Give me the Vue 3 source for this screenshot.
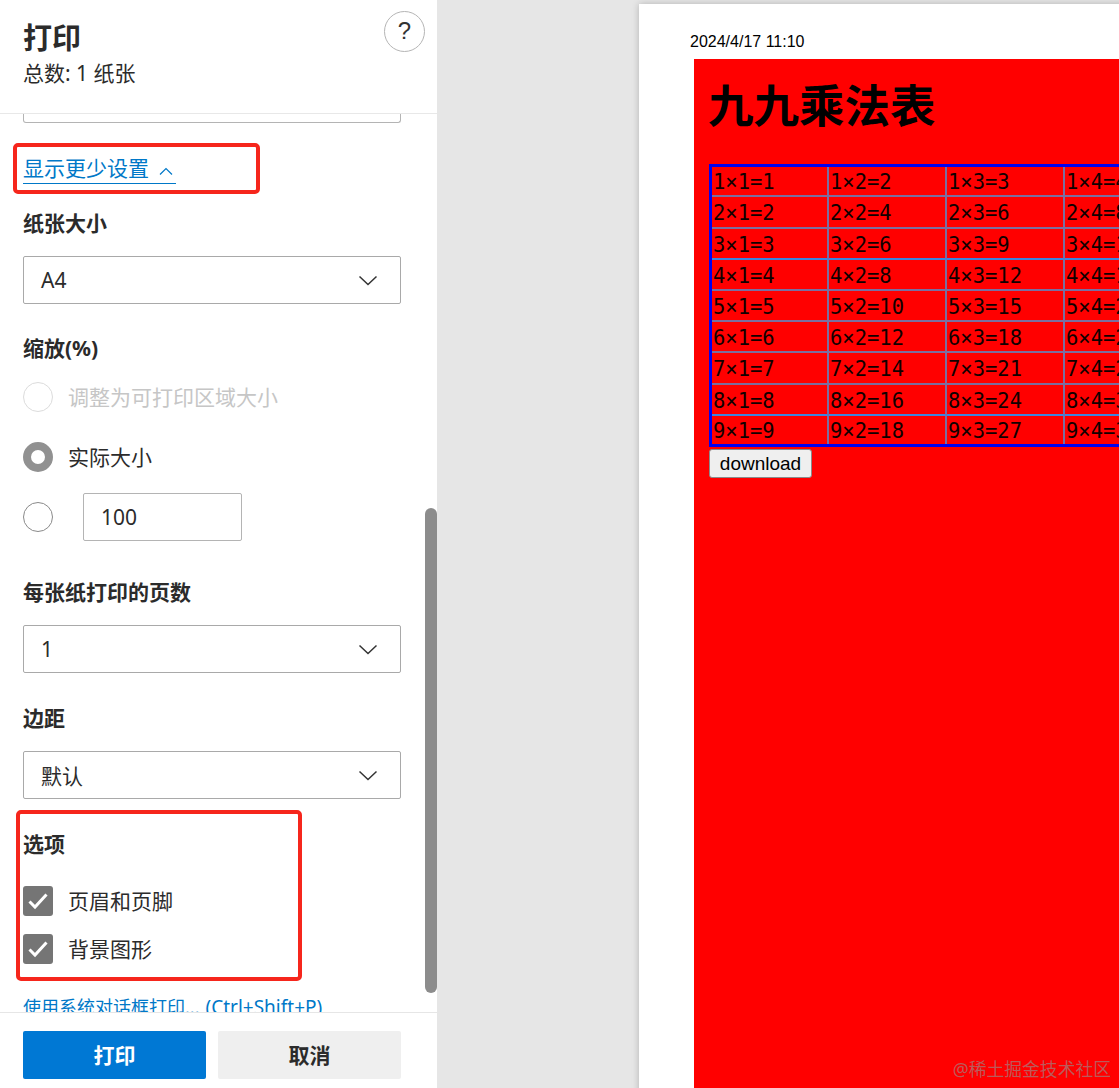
<script setup>
const rows = [1, 2, 3, 4, 5, 6, 7, 8, 9]
const cols = [1, 2, 3, 4, 5, 6, 7, 8, 9]
const rowHeights = [30, 32, 31, 31, 31, 31, 32, 31, 28]
const selects = { paper: 'A4', pages: '1', margin: '默认' }
</script>

<template>
  <div class="screen">
    <aside class="panel">
      <header class="head">
        <div>
          <h1 class="title">打印</h1>
          <p class="total">总数: 1 纸张</p>
        </div>
        <button class="help">?</button>
      </header>

      <div class="scroll">
        <div class="cut-select"></div>
        <a class="more">
          <span>显示更少设置</span>
          <svg width="14" height="8" viewBox="0 0 14 8"><path d="M1 7.500 7 1.500l6 6" fill="none" stroke="#0078c8" stroke-width="1.2"/></svg>
        </a>

        <div class="label paper-label">纸张大小</div>
        <div class="select"><span>{{ selects.paper }}</span><svg class="chev" width="20" height="11" viewBox="0 0 20 11"><path d="M1.500 1.500 10 9.500l8.500-8" fill="none" stroke="#333" stroke-width="1.500"/></svg></div>

        <div class="label gap30">缩放(%)</div>
        <div class="radio-row first disabled"><i class="radio off"></i><span>调整为可打印区域大小</span></div>
        <div class="radio-row second"><i class="radio on"></i><span>实际大小</span></div>
        <div class="radio-row third"><i class="radio"></i><div class="num">100</div></div>

        <div class="label gap37">每张纸打印的页数</div>
        <div class="select"><span>{{ selects.pages }}</span><svg class="chev" width="20" height="11" viewBox="0 0 20 11"><path d="M1.500 1.500 10 9.500l8.500-8" fill="none" stroke="#333" stroke-width="1.500"/></svg></div>

        <div class="label gap31">边距</div>
        <div class="select"><span>{{ selects.margin }}</span><svg class="chev" width="20" height="11" viewBox="0 0 20 11"><path d="M1.500 1.500 10 9.500l8.500-8" fill="none" stroke="#333" stroke-width="1.500"/></svg></div>

        <div class="label gap31">选项</div>
        <div class="check-row first-check">
          <i class="check"><svg width="30" height="30" viewBox="0 0 30 30"><path d="M6.500 15.500 12 21 23.500 8.500" fill="none" stroke="#fff" stroke-width="3"/></svg></i>
          <span>页眉和页脚</span>
        </div>
        <div class="check-row second-check">
          <i class="check"><svg width="30" height="30" viewBox="0 0 30 30"><path d="M6.500 15.500 12 21 23.500 8.500" fill="none" stroke="#fff" stroke-width="3"/></svg></i>
          <span>背景图形</span>
        </div>
        <a class="system">使用系统对话框打印...<span class="keys">(Ctrl+Shift+P)</span></a>
      </div>

      <footer class="foot">
        <button class="btn primary">打印</button>
        <button class="btn">取消</button>
      </footer>

      <div class="bar"></div>
      <div class="mark mark-a"></div>
      <div class="mark mark-b"></div>
    </aside>

    <main class="preview">
      <div class="sheet">
        <div class="date">2024/4/17 11:10</div>
        <div class="red">
          <h2 class="heading">九九乘法表</h2>
          <table class="grid">
            <tbody>
              <tr v-for="r in rows" :key="r" :class="{ bright: r === 3 || r === 8 }">
                <td v-for="c in cols" :key="c" :style="{ height: rowHeights[r - 1] + 'px' }">{{ r }}×{{ c }}={{ r * c }}</td>
              </tr>
            </tbody>
          </table>
          <button class="download">download</button>
        </div>
      </div>
      <div class="watermark">@稀土掘金技术社区</div>
    </main>
  </div>
</template>

<style>
html, body { margin: 0; overflow: hidden; }
</style>

<style scoped>
.screen {
  display: flex;
  width: 1119px;
  height: 1088px;
  overflow: hidden;
  color: #2b2b2b;
  font-family: "Noto Sans", "Noto Sans CJK SC", sans-serif;
}
.panel {
  position: relative;
  flex: 0 0 437px;
  height: 1088px;
  display: flex;
  flex-direction: column;
  background: #fff;
}
.head {
  flex: 0 0 114px;
  box-sizing: border-box;
  padding: 21px 12px 0 23px;
  display: flex;
  justify-content: space-between;
  align-items: flex-start;
  border-bottom: 1px solid #e8e8e8;
}
.title { margin: 0; font-size: 29px; line-height: 34px; font-weight: 700; }
.total { margin: 4px 0 0; font-size: 21px; line-height: 28px; }
.help {
  width: 41px;
  height: 41px;
  margin-top: -10px;
  padding: 0 0 2px;
  border: 1px solid #b5b5b5;
  border-radius: 50%;
  background: #fff;
  color: #333;
  font: 24px/1 "Liberation Sans", sans-serif;
}
.scroll {
  flex: 1;
  min-height: 0;
  overflow: hidden;
  padding: 0 36px 0 23px;
}
.cut-select {
  height: 8px;
  border: 1px solid #b4b4b4;
  border-top: 0;
  border-radius: 0 0 3px 3px;
}
.more {
  display: flex;
  width: fit-content;
  align-items: center;
  gap: 10px;
  height: 28px;
  margin-top: 32px;
  border-bottom: 1px solid #0078c8;
  color: #0078c8;
  font-size: 21px;
  line-height: 26px;
  padding-right: 3px;
}
.more span { margin-top: -2px; }
.more svg { margin-top: 4px; }
.label {
  height: 30px;
  font-size: 21px;
  line-height: 28px;
  font-weight: 700;
  margin-bottom: 17px;
}
.paper-label { margin-top: 25px; }
.gap30 { margin-top: 30px; margin-bottom: 18px; }
.gap37 { margin-top: 37px; }
.gap31 { margin-top: 31px; }
.select {
  box-sizing: border-box;
  height: 48px;
  border: 1px solid #a9a9a9;
  border-radius: 2px;
  padding: 0 22px 0 17px;
  display: flex;
  align-items: center;
  justify-content: space-between;
  font-size: 21px;
}
.radio-row, .check-row {
  display: flex;
  align-items: center;
  font-size: 21px;
}
.radio-row span, .check-row span { margin-left: 15px; margin-top: -2px; }
.radio-row { height: 30px; }
.radio-row.second { margin-top: 30px; }
.radio-row.third { margin-top: 21px; height: 48px; }
.disabled { color: #c6c6c6; }
.radio {
  box-sizing: border-box;
  width: 30px;
  height: 30px;
  border: 1px solid #8a8a8a;
  border-radius: 50%;
}
.radio.off { border-color: #dcdcdc; }
.radio.on { border: 8px solid #919191; }
.num {
  box-sizing: border-box;
  width: 159px;
  height: 48px;
  margin-left: 30px;
  padding-left: 17px;
  border: 1px solid #b4b4b4;
  border-radius: 2px;
  font-size: 21px;
  line-height: 46px;
}
.check-row { height: 30px; }
.first-check { margin-top: 26px; }
.second-check { margin-top: 18px; }
.check {
  width: 30px;
  height: 30px;
  border-radius: 3px;
  background: #757575;
  display: block;
}
.check svg { display: block; }
.system {
  display: block;
  margin-top: 29px;
  font-size: 18px;
  line-height: 28px;
  color: #0078c8;
  white-space: nowrap;
}
.keys { font-size: 19px; margin-left: 6px; }
.foot {
  flex: 0 0 76px;
  box-sizing: border-box;
  padding: 18px 36px 0 23px;
  display: flex;
  gap: 12px;
  border-top: 1px solid #e6e6e6;
  background: #fff;
}
.btn {
  flex: 1;
  height: 48px;
  padding: 0;
  border: 0;
  border-radius: 2px;
  background: #efefef;
  color: #2b2b2b;
  font: 700 21px/46px "Noto Sans", "Noto Sans CJK SC", sans-serif;
}
.btn.primary { background: #0078d4; color: #fff; }
.bar {
  position: absolute;
  left: 425px;
  top: 508px;
  width: 12px;
  height: 485px;
  border-radius: 6px;
  background: #8c8c8c;
}
.mark {
  position: absolute;
  box-sizing: border-box;
  border: 4px solid #f6261c;
  border-radius: 5px;
}
.mark-a { left: 13px; top: 143px; width: 247px; height: 51px; }
.mark-b { left: 16px; top: 810px; width: 286px; height: 171px; }

.preview {
  position: relative;
  flex: 1;
  min-width: 0;
  background: #e6e6e6;
  padding: 4px 0 0 202px;
}
.sheet {
  width: 700px;
  height: 1100px;
  background: #fff;
  box-shadow: 0 0 7px rgba(0, 0, 0, 0.22);
}
.date {
  height: 55px;
  padding-left: 51px;
  box-sizing: border-box;
  padding-top: 29px;
  font: 16px/18px "Liberation Sans", sans-serif;
  color: #000;
}
.red {
  margin-left: 55px;
  height: 1045px;
  background: #f00;
  padding: 1px 0 0 15px;
}
.heading {
  margin: 0 0 0 -1px;
  height: 104px;
  font: 700 45.5px/86px "Noto Sans CJK SC", sans-serif;
  color: #000;
}
.grid {
  table-layout: fixed;
  width: 1065px;
  border-collapse: separate;
  border-spacing: 0;
  border: 3px solid #0000f0;
  font: 20.5px/1 "DejaVu Sans Mono", monospace;
  color: #100000;
}
td {
  box-sizing: border-box;
  width: 118px;
  padding: 3px 0 0 1px;
  border-right: 2px solid #7a6ea0;
  border-bottom: 2px solid #7a6ea0;
  white-space: nowrap;
  overflow: hidden;
}
td:first-child { width: 117px; }
tr:last-child td { border-bottom: 0; }
tr.bright td { border-bottom-color: #3d85de; }
.download {
  display: block;
  box-sizing: border-box;
  width: 103px;
  height: 29px;
  margin-top: 2px;
  padding: 0;
  border: 1px solid #8a8a8a;
  border-radius: 3px;
  background: #efefef;
  color: #000;
  font: 19px/25px "Liberation Sans", sans-serif;
}
.watermark {
  position: absolute;
  right: 8px;
  bottom: 7px;
  font-size: 17.800px;
  line-height: 24px;
  color: rgba(165, 120, 120, 0.75);
  white-space: nowrap;
}
</style>
